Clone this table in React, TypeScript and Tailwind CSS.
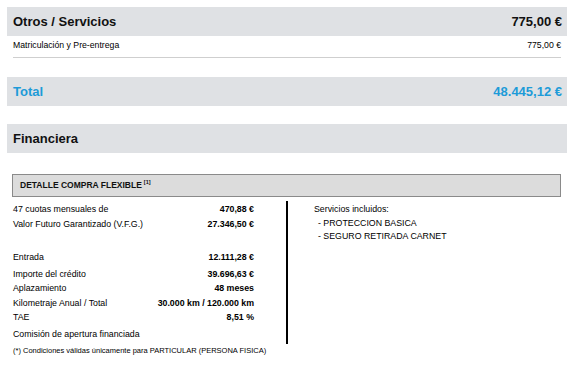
import React from 'react';

const font = { fontFamily: '"Liberation Sans", Arial, sans-serif' };

const rows1 = [
  { label: '47 cuotas mensuales de', value: '470,88 €' },
  { label: 'Valor Futuro Garantizado (V.F.G.)', value: '27.346,50 €' },
];

const rows2 = [
  { label: 'Entrada', value: '12.111,28 €', extra: '' },
  { label: 'Importe del crédito', value: '39.696,63 €', extra: 'mt-[2px]' },
  { label: 'Aplazamiento', value: '48 meses', extra: '' },
  { label: 'Kilometraje Anual / Total', value: '30.000 km / 120.000 km', extra: '' },
  { label: 'TAE', value: '8,51 %', extra: '' },
  { label: 'Comisión de apertura financiada', value: '', extra: 'mt-[2px]' },
];

function Band({ title, amount, blue }: { title: string; amount?: string; blue?: boolean }) {
  return (
    <div
      className={`h-[29px] bg-[#dfe1e4] flex items-center justify-between pl-[6px] pr-[5px] text-[13px] font-bold ${
        blue ? 'text-[#1d9bd8]' : 'text-[#111]'
      }`}
    >
      <span>{title}</span>
      {amount && <span>{amount}</span>}
    </div>
  );
}

export default function App() {
  return (
    <div className="w-[584px] h-[367px] bg-white pl-[7px] pt-[7px] overflow-hidden" style={font}>
      <div className="w-[560px]">
        <Band title="Otros / Servicios" amount="775,00 €" />
        <div className="mx-[6px] h-[22px] pt-[2px] flex justify-between text-[8.7px] leading-[14px] text-black border-b border-[#cfcfcf]">
          <span>Matriculación y Pre-entrega</span>
          <span>775,00 €</span>
        </div>

        <div className="mt-[19px]">
          <Band title="Total" amount="48.445,12 €" blue />
        </div>

        <div className="mt-[18px]">
          <Band title="Financiera" />
        </div>

        <div className="mt-[21px] ml-[5px] w-[549px] h-[23px] bg-[#dcdcdc] border border-[#8a8a8a] flex items-center pl-[7px] text-[8.5px] font-bold text-[#111]">
          DETALLE COMPRA FLEXIBLE
          <sup className="text-[5.5px] ml-[2px] -top-[4px]">[1]</sup>
        </div>

        <div className="flex ml-[6px] mt-[4px]">
          <div className="w-[241px] pt-[1px] pb-[3px] text-[8.8px] leading-[12px] text-black">
            {rows1.map((r) => (
              <div key={r.label} className="h-[14.5px] flex items-center justify-between">
                <span>{r.label}</span>
                <span className="font-bold">{r.value}</span>
              </div>
            ))}
            <div className="h-[19px]" />
            {rows2.map((r) => (
              <div key={r.label} className={`h-[14.5px] flex items-center justify-between ${r.extra}`}>
                <span>{r.label}</span>
                <span className="font-bold">{r.value}</span>
              </div>
            ))}
          </div>
          <div className="ml-[32px] w-[2px] bg-black" />
          <div className="ml-[26px] pt-[1px] text-[8.8px] leading-[12px] text-black">
            <div className="h-[14px] flex items-center">Servicios incluidos:</div>
            <div className="h-[13px] flex items-center pl-[4px]">- PROTECCION BASICA</div>
            <div className="h-[13px] flex items-center pl-[4px]">- SEGURO RETIRADA CARNET</div>
          </div>
        </div>

        <div className="ml-[6px] mt-[1px] text-[7.5px] leading-[12px] text-black">
          (*) Condiciones válidas únicamente para PARTICULAR (PERSONA FISICA)
        </div>
      </div>
    </div>
  );
}
